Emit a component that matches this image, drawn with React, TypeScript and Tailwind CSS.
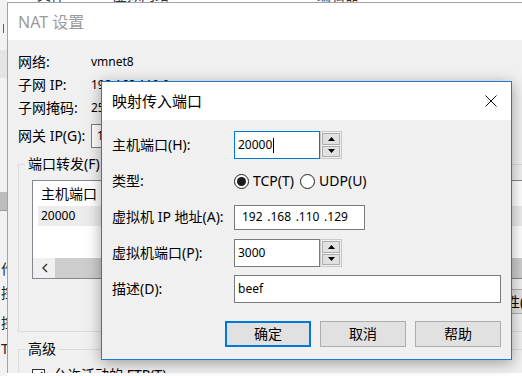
import React from "react";

const ui = "font-['Noto_Sans','Noto_Sans_CJK_SC',sans-serif]";

function Tri({ down = false }: { down?: boolean }) {
  return (
    <svg width="7" height="4" viewBox="0 0 7 4" className="block">
      <polygon points={down ? "0,0 7,0 3.5,4" : "0,4 7,4 3.5,0"} fill="#000" />
    </svg>
  );
}

function Spinner() {
  return (
    <div className="flex h-[28px] w-[22px] flex-col gap-[1px] border border-[#c8c8c8] p-[1px]">
      <div className="flex flex-1 items-center justify-center border border-[#adadad] bg-[#e1e1e1]">
        <Tri />
      </div>
      <div className="flex flex-1 items-center justify-center border border-[#adadad] bg-[#e1e1e1]">
        <Tri down />
      </div>
    </div>
  );
}

function Radio({ checked = false }: { checked?: boolean }) {
  return (
    <span className="flex h-[15px] w-[15px] items-center justify-center rounded-full border border-[#1f1f1f] bg-white">
      {checked && <span className="h-[9px] w-[9px] rounded-full bg-[#1a1a1a]" />}
    </span>
  );
}

function Row({ label, children }: { label: string; children: React.ReactNode }) {
  return (
    <div className="flex h-[36px] items-center">
      <span className="w-[122px] shrink-0">{label}</span>
      {children}
    </div>
  );
}

function Btn({ label, primary = false }: { label: string; primary?: boolean }) {
  return (
    <div
      className={
        primary
          ? "flex h-[26px] w-[86px] items-center justify-center border-2 border-[#0078d7] bg-[#e1e1e1]"
          : "flex h-[26px] w-[86px] items-center justify-center border border-[#adadad] bg-[#e1e1e1]"
      }
    >
      {label}
    </div>
  );
}

function MapDialog() {
  return (
    <div className="absolute left-[101px] top-[81px] flex h-[279px] w-[411px] flex-col border border-[#1c7cd5] bg-[#f0f0f0] shadow-[0_3px_14px_rgba(0,0,0,0.35)]">
      <div className="flex h-[38px] shrink-0 items-center justify-between bg-white pl-[10px] pr-[14px]">
        <span className="text-[15px] leading-[18px] text-black">映射传入端口</span>
        <svg width="12" height="12" viewBox="0 0 12 12" className="block">
          <path d="M0.5 0.5L11.5 11.5M11.5 0.5L0.5 11.5" stroke="#111" strokeWidth="1" />
        </svg>
      </div>
      <div className="flex flex-1 flex-col px-[10px] pt-[7px] text-[14px] leading-[16px] text-black">
        <Row label="主机端口(H):">
          <div className="flex h-[28px] w-[86px] items-center border border-[#0078d7] bg-white pl-[3px] text-[12px]">
            20000
            <span className="ml-[1px] h-[15px] w-[1px] bg-black" />
          </div>
          <Spinner />
        </Row>
        <Row label="类型:">
          <div className="flex items-center">
            <Radio checked />
            <span className="ml-[4px]">TCP(T)</span>
            <span className="ml-[6px]">
              <Radio />
            </span>
            <span className="ml-[4px]">UDP(U)</span>
          </div>
        </Row>
        <Row label="虚拟机 IP 地址(A):">
          <div className="flex h-[25px] w-[131px] items-center whitespace-pre border border-[#7a7a7a] bg-white pl-[7px] text-[12px] [word-spacing:1.5px]">
            192 .168 .110 .129
          </div>
        </Row>
        <Row label="虚拟机端口(P):">
          <div className="flex h-[28px] w-[86px] items-center border border-[#7a7a7a] bg-white pl-[3px] text-[12px]">
            3000
          </div>
          <Spinner />
        </Row>
        <Row label="描述(D):">
          <div className="flex h-[28px] w-[267px] items-center border border-[#7a7a7a] bg-white pl-[3px] text-[12px]">
            beef
          </div>
        </Row>
        <div className="mt-[14px] flex justify-end gap-[9px]">
          <Btn label="确定" primary />
          <Btn label="取消" />
          <Btn label="帮助" />
        </div>
      </div>
    </div>
  );
}

function InfoRow({ label, value }: { label: string; value: string }) {
  return (
    <div className="flex h-[23px] items-center">
      <span className="w-[73px] shrink-0">{label}</span>
      <span className="text-[12px]">{value}</span>
    </div>
  );
}

function LeftStrip() {
  return (
    <div className="flex h-full w-[7px] shrink-0 flex-col overflow-hidden bg-[#f2f2f2] text-[14px] leading-[16px] text-[#222]">
      <div className="h-[24px] shrink-0" />
      <div className="ml-[3px] h-[9px] w-[1px] shrink-0 bg-[#3b5bdb]" />
      <div className="h-[17px] shrink-0" />
      <div className="h-[28px] shrink-0 bg-[#e4e4e4]" />
      <div className="h-[114px] shrink-0" />
      <div className="h-[18px] shrink-0 bg-[#bdbdbd]" />
      <div className="h-[1px] shrink-0 bg-[#9a9a9a]" />
      <div className="h-[50px] shrink-0" />
      <span className="ml-[1px] shrink-0">作</span>
      <div className="h-[8px] shrink-0" />
      <span className="ml-[1px] shrink-0">控</span>
      <div className="h-[14px] shrink-0" />
      <span className="ml-[1px] shrink-0">控</span>
      <div className="h-[10px] shrink-0" />
      <span className="ml-[1px] shrink-0">T</span>
    </div>
  );
}

function NatWindow() {
  return (
    <div className="flex h-[371px] shrink-0 flex-col overflow-hidden border-l border-t border-[#a3a3a3]">
      <div className="flex h-[37px] shrink-0 items-center bg-white pl-[10px]">
        <span className="text-[16px] leading-[18px] text-[#9a9a9a]">NAT 设置</span>
      </div>
      <div className="flex-1 bg-[#f0f0f0] pl-[10px] pt-[10px] text-[14px] leading-[16px] text-black">
        <InfoRow label="网络:" value="vmnet8" />
        <InfoRow label="子网 IP:" value="192.168.110.0" />
        <InfoRow label="子网掩码:" value="255.255.255.0" />
        <div className="mt-[5px] flex h-[24px] items-center">
          <span className="w-[73px] shrink-0">网关 IP(G):</span>
          <div className="flex h-[24px] w-[160px] shrink-0 items-center border border-[#7a7a7a] bg-white pl-[5px] text-[12px]">
            192.168.110.2
          </div>
        </div>

        <fieldset className="mt-[8px] w-[540px] border border-[#dcdcdc] pb-[17px]">
          <legend className="ml-[6px] px-[3px] text-[14px] leading-[16px]">端口转发(F)</legend>
          <div className="ml-[13px] mt-[8px] flex h-[99px] w-[520px] flex-col border border-[#828790] bg-white">
            <div className="flex h-[25px] shrink-0 items-center pl-[8px]">主机端口</div>
            <div className="ml-[5px] flex h-[20px] shrink-0 items-center bg-[#ececec] pl-[3px] text-[12px]">
              20000
            </div>
            <div className="flex-1" />
            <div className="flex h-[20px] shrink-0 bg-[#f0f0f0]">
              <div className="flex w-[22px] items-center pl-[9px]">
                <svg width="6" height="10" viewBox="0 0 6 10" className="block">
                  <path d="M5 1L1 5L5 9" stroke="#333" strokeWidth="1.4" fill="none" />
                </svg>
              </div>
              <div className="flex-1 bg-[#cdcdcd]" />
            </div>
          </div>
          <div className="mt-[10px] flex h-[25px]">
            <div className="ml-[458px] flex w-[75px] items-center justify-center border border-[#adadad] bg-[#e1e1e1]">
              属性(P)
            </div>
          </div>
        </fieldset>

        <fieldset className="mt-[9px] w-[540px] border border-[#dcdcdc] pb-[10px]">
          <legend className="ml-[6px] px-[3px] text-[14px] leading-[16px]">高级</legend>
          <div className="ml-[13px] mt-[10px] flex items-center">
            <span className="flex h-[13px] w-[13px] items-center justify-center border border-[#333] bg-white">
              <svg width="9" height="8" viewBox="0 0 9 8" className="block">
                <path d="M0.8 4L3.3 6.5L8.2 1" stroke="#222" strokeWidth="1.3" fill="none" />
              </svg>
            </span>
            <span className="ml-[8px]">允许活动的 FTP(T)</span>
          </div>
        </fieldset>
      </div>
    </div>
  );
}

export default function App() {
  return (
    <div className={`relative flex h-[376px] w-[522px] overflow-hidden bg-white ${ui}`}>
      <LeftStrip />
      <div className="flex min-w-0 flex-1 flex-col">
        <div className="h-[2px] shrink-0 overflow-hidden">
          <div className="-mt-[13px] flex whitespace-nowrap text-[14px] leading-[16px] text-[#333]">
            <span className="ml-[30px]">文件</span>
            <span className="ml-[48px]">虚拟网络</span>
            <span className="ml-[148px]">编辑器</span>
          </div>
        </div>
        <NatWindow />
      </div>
      <MapDialog />
    </div>
  );
}
